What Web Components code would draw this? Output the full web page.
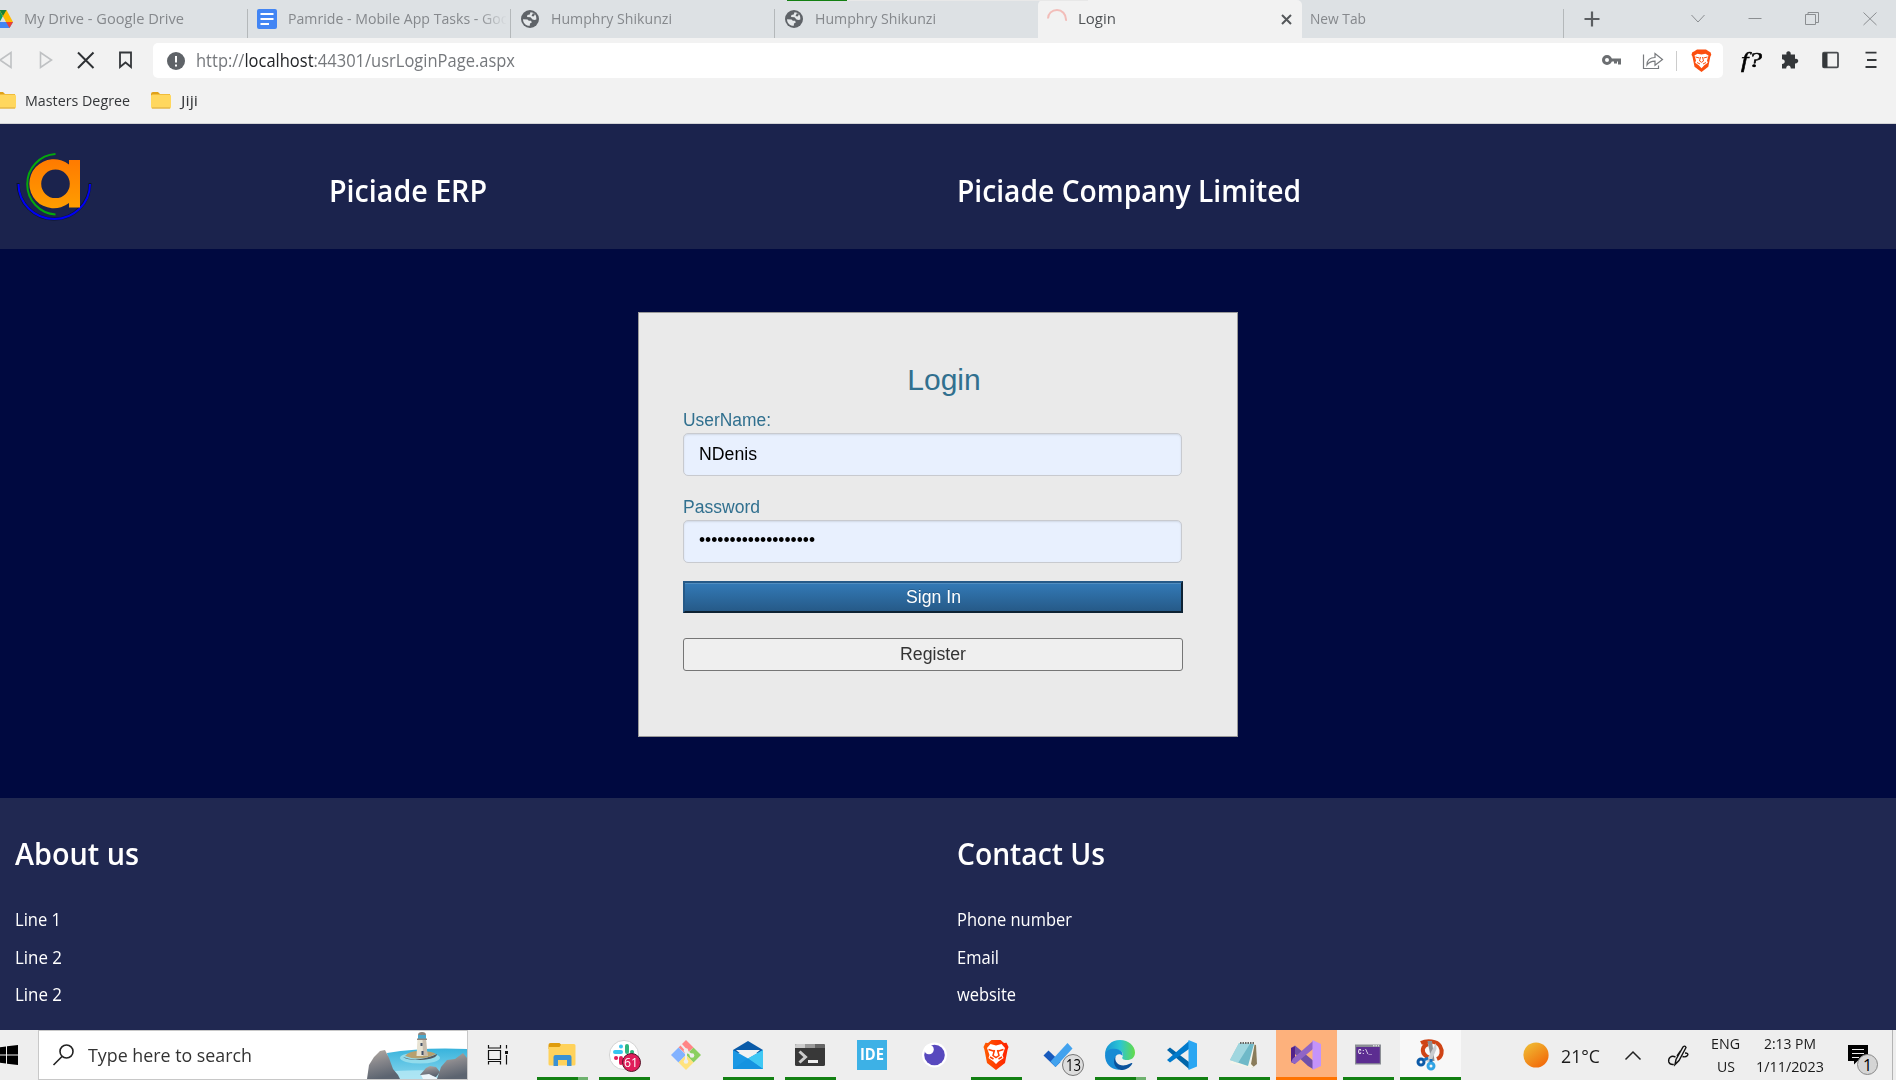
<!DOCTYPE html>
<html lang="en">
<head>
<meta charset="utf-8">
<title>Login</title>
<style>
html,body{margin:0;height:100%;overflow:hidden;background:#000940}
body{font-family:"Open Sans","Noto Sans",sans-serif}
</style>
</head>
<body>
<app-screen></app-screen>

<template id="t-screen">
<style>:host{display:flex;flex-direction:column;width:1896px;height:1080px;overflow:hidden}</style>
<browser-chrome></browser-chrome>
<site-header></site-header>
<login-panel></login-panel>
<site-footer></site-footer>
<task-bar></task-bar>
</template>

<template id="t-tab">
<style>
:host{display:flex;align-items:center;flex:none;box-sizing:border-box;width:263.5px;height:38px;color:#85888c;font-size:15px;position:relative;line-height:37px}
:host([sep])::after{content:"";position:absolute;right:0;top:9px;width:1px;height:29px;background:#b4b8ba}
:host([active]){background:#f2f2f2;color:#505356;border-radius:5px 5px 0 0}
.i{display:flex;width:20px;height:20px;margin-left:9px;flex:none;align-items:center;justify-content:center}
.t{margin:-1px 0 0 11px;flex:1;overflow:hidden;white-space:nowrap;display:flex}
:host([fade]) .t{-webkit-mask-image:linear-gradient(90deg,#000 190px,transparent 219px);margin-right:5px}
</style>
<span class="i"><slot name="icon"></slot></span><span class="t"><slot></slot></span><slot name="end"></slot>
</template>

<template id="t-chrome">
<style>
:host{display:flex;flex-direction:column;height:124px;flex:none;background:#f2f2f2;box-sizing:border-box;border-bottom:1px solid #d2d3d6;position:relative}
svg{display:block;flex:none}
.tabs{display:flex;height:38px;background:#dde1e4}
.tabs browser-tab:first-child{margin-left:-16px}
.bar{display:flex;align-items:center;height:40px}
.addr{display:flex;align-items:center;width:1570px;height:35px;background:#fff;border-radius:5px;margin:5px 0 0 21px;font-size:17.500px;color:#75787c;flex:none;line-height:35px}
.addr b{font-weight:400;color:#222427}
.marks{display:flex;align-items:center;height:45px;font-size:15px;color:#35373a}
.marks fit-text{margin-top:-2px}
.edge{position:absolute;left:787px;top:0;width:301px;height:1px;background:linear-gradient(90deg,#138012 60px,#e8e8e8 60px)}
.nav{margin-top:5px}
</style>
<div class="tabs">
<browser-tab sep><svg slot="icon" width="20" height="18" viewBox="0 0 20 18"><path d="M6.5 0L10 6 3.5 18 0 12z" fill="#0f9d58"/><path d="M6.5 0h7L20 12h-7z" fill="#ffba00"/><path d="M6.5 0h7L10 6z" fill="#188038"/><path d="M4 12h16l-3.5 6H.5z" fill="#4285f4"/><path d="M13 12h7l-3.5 6z" fill="#ea4335"/></svg><fit-text w="160">My Drive - Google Drive</fit-text></browser-tab>
<browser-tab sep fade><svg slot="icon" width="20" height="20" viewBox="0 0 20 20"><rect width="20" height="20" rx="2" fill="#4285f4"/><path d="M3.500 5h13M3.500 10h13M3.500 15h8.500" stroke="#fff" stroke-width="2"/></svg><fit-text w="229">Pamride - Mobile App Tasks - Goog</fit-text></browser-tab>
<browser-tab sep><svg slot="icon" width="18" height="18" viewBox="0 0 18 18"><circle cx="9" cy="9" r="9" fill="#5f6368"/><path d="M2 9.200l4.500.2 1.300 1.400h2.300l.7 1.600-1.800 1-.2 2.300C5 16 2 13 2 9.200zM9.500 2.200l-.8 2.200-2.300.7-.4 2 3.500.2 2 2.200 2 .6 1.800-.6C16 5 13 2.100 9.500 2.200z" fill="#e5e8ea"/><path d="M12 3l2 1.600-1.500 1.800L10.500 6z" fill="#5f6368"/></svg><fit-text w="121">Humphry Shikunzi</fit-text></browser-tab>
<browser-tab><svg slot="icon" width="18" height="18" viewBox="0 0 18 18"><circle cx="9" cy="9" r="9" fill="#5f6368"/><path d="M2 9.200l4.500.2 1.300 1.400h2.300l.7 1.600-1.800 1-.2 2.300C5 16 2 13 2 9.200zM9.500 2.200l-.8 2.200-2.300.7-.4 2 3.500.2 2 2.200 2 .6 1.800-.6C16 5 13 2.100 9.500 2.200z" fill="#e5e8ea"/><path d="M12 3l2 1.600-1.500 1.800L10.500 6z" fill="#5f6368"/></svg><fit-text w="121">Humphry Shikunzi</fit-text></browser-tab>
<browser-tab active><svg slot="icon" width="20" height="20" viewBox="0 0 20 20"><path d="M1 9.500C1 4.500 5 1 10 1s9 4 9 9.500c0 .7 0 1-.1 1.300" fill="none" stroke="#f2bdb9" stroke-width="2"/></svg><fit-text w="38">Login</fit-text><svg slot="end" width="11" height="11" viewBox="0 0 11 11" style="margin-right:10px"><path d="M1 1l9 9M10 1l-9 9" stroke="#55585b" stroke-width="2"/></svg></browser-tab>
<browser-tab sep style="margin-left:-31px;width:293px"><fit-text w="56">New Tab</fit-text></browser-tab>
<svg width="332" height="38" viewBox="0 0 332 38" fill="none" stroke="#8b8e91"><path d="M28 11.500v15M20.500 19h15" stroke="#5b5e61" stroke-width="2.200"/><path d="M127.500 15l6.500 7 6.500-7"/><path d="M184.500 18.500h13"/><path d="M241.500 14.500h10v10h-10zM244 14.500v-2h10.500v10H252"/><path d="M299.500 12.500l13 12.500M312.500 12.500L299.500 25"/></svg>
</div>
<div class="bar">
<svg class="nav" width="132" height="35" viewBox="0 0 132 35" fill="none" stroke-width="1.600"><path d="M11 9.500v15L0 17z" stroke="#bfc1c3"/><path d="M40.500 9.500v15l11-7.500z" stroke="#bfc1c3"/><path d="M78 9.500l15.500 15.500M93.500 9.500L78 25" stroke="#2e3134" stroke-width="2"/><path d="M120 9.500h11V24l-5.500-4.500L120 24z" stroke="#34373a" stroke-width="1.800"/></svg>
<div class="addr">
<svg width="18" height="18" viewBox="0 0 18 18" style="margin-left:13.500px"><circle cx="9" cy="9" r="9" fill="#5f6368"/><path d="M9 4v6.500M9 12.500v2" stroke="#fff" stroke-width="2"/></svg>
<fit-text w="319" style="margin-left:11px">http://<b>localhost</b>:44301/usrLoginPage.aspx</fit-text>
<svg width="110" height="35" viewBox="0 0 110 35" style="margin-left:1087px"><circle cx="5" cy="17" r="3.500" fill="none" stroke="#6b6e71" stroke-width="3"/><path d="M9 17h8.500v4.500M13.500 17v3.500" fill="none" stroke="#6b6e71" stroke-width="3"/><path d="M41.500 11.500v14h15v-3" fill="none" stroke="#787b7e" stroke-width="1.200"/><path d="M45 22c0-5 3-7.500 8-7.500v-4l7.500 6-7.500 5.800v-4.200c-4 0-6 1-8 3.900z" fill="none" stroke="#787b7e" stroke-width="1.200"/><path d="M74.500 8v20" stroke="#ccc"/><path d="M92 8.500l3-2h9l3 2 1.500.8.8 2.500-1 2-2 10L99.500 29l-7-5.200-2-10-1-2 .8-2.500z" fill="#fb4f10"/><path d="M92.500 12.500l3-1.800 4 .8 4-.8 3 1.800-1.500 5 .8 2.200-3.500 2.600-2.800 3-2.800-3-3.500-2.600.8-2.200z" fill="#fff"/><path d="M93.500 14l4 1M105.500 14l-4 1M98.500 14l-1 4 2 1.300 2-1.300-1-4M95 19.500l3 1.500M104 19.500l-3 1.500" stroke="#fb4f10" fill="none"/></svg>
</div>
<fit-text w="21" style="margin:3px 0 0 18px;font:italic 400 20px/34px 'Liberation Serif',serif;color:#000;-webkit-text-stroke:.5px #000">f?</fit-text>
<svg class="nav" width="120" height="35" viewBox="0 0 120 35" style="margin-left:17px"><path d="M4 11.500h3.500c-1.300-4 5-4.500 4.200 0H16V16c4-1.200 4.700 4.800 0 4.400v5.100h-4.200c0-4-4.600-4-4.600 0H3v-4.600c3.700-.2 3.700-4.600 0-4.700v-4.700z" fill="#34373a"/><rect x="44" y="9.700" width="15" height="14.600" rx="1" fill="none" stroke="#4a4d50" stroke-width="1.800"/><path d="M44 10h4.500v14.500H44z" fill="#34373a"/><path d="M86.500 9.700h11M88 17h9.500M86.500 24h11" stroke="#34373a" stroke-width="1.800"/></svg>
</div>
<div class="marks">
<svg width="20" height="17" viewBox="0 0 20 17" style="margin-left:-4px"><path d="M0 2q0-2 2-2h5l2 2h10v5H0z" fill="#e0a118"/><rect x="0" y="2.500" width="20" height="14" rx="1.500" fill="#ffd75e"/><path d="M1 16h18" stroke="#d9a83d"/></svg>
<fit-text w="105" style="margin-left:9px">Masters Degree</fit-text>
<svg width="20" height="17" viewBox="0 0 20 17" style="margin-left:21px"><path d="M0 2q0-2 2-2h5l2 2h10v5H0z" fill="#e0a118"/><rect x="0" y="2.500" width="20" height="14" rx="1.500" fill="#ffd75e"/><path d="M1 16h18" stroke="#d9a83d"/></svg>
<fit-text w="17" style="margin-left:9.500px">Jiji</fit-text>
</div>
<div class="edge"></div>
</template>

<template id="t-header">
<style>
:host{display:flex;height:125px;flex:none;background:#1b234d;color:#fff;font-weight:600;font-size:30px;box-sizing:border-box;padding-left:14px}
svg{margin-top:24px;flex:none}
fit-text{line-height:134px}
</style>
<svg width="84" height="76" viewBox="14 148 84 76" fill="none"><defs><linearGradient id="o" x1="0" y1="0" x2="0" y2="1"><stop offset="0" stop-color="#ff7a00"/><stop offset="1" stop-color="#ff9d00"/></linearGradient></defs><path d="M18 185a36 36 0 0 0 72 0" stroke="#000a18" stroke-width="3" transform="translate(0 -2)" opacity=".6"/><path d="M18.500 184a35.700 35 0 0 0 71.500 0" stroke="#0000f5" stroke-width="2"/><path d="M55.500 154a30 30.300 0 0 0 0 60.500" stroke="#05a80c" stroke-width="2"/><path fill-rule="evenodd" fill="url(#o)" d="M69 164.500V160h11v47.500H69V203a24.500 24.500 0 1 1 0-38.500zM55.500 169.500a14.300 14.300 0 1 0 0 28.600 14.300 14.300 0 1 0 0-28.600z"/></svg>
<fit-text w="158" style="margin-left:231px">Piciade ERP</fit-text>
<fit-text w="344" style="margin-left:470px">Piciade Company Limited</fit-text>
</template>

<template id="t-field">
<style>
:host{display:block}
label{display:flex;color:#31708f;line-height:26px;height:26px}
div{box-sizing:border-box;height:43px;border:1px solid #c8cacf;border-radius:5px;background:#e8f0fe;box-shadow:inset 0 1px 2px rgba(0,0,0,.1);padding-left:15px;color:#000;line-height:41px;display:flex}
</style>
<label><slot name="label"></slot></label><div><slot></slot></div>
</template>

<template id="t-login">
<style>
:host{display:flex;flex-direction:column;height:549px;flex:none;background:#000940;font:18px "Liberation Sans",Arial,sans-serif;box-sizing:border-box;padding:63px 0 0 638px}
section{box-sizing:border-box;width:600px;height:425px;border:1px solid #999;background:#eaeaea;padding:46px 55px 0 44px;display:flex;flex-direction:column}
h1{margin:0 -23px 6px 0;font-weight:400;font-size:30px;line-height:42px;text-align:center;color:#31708f}
button{font:inherit;width:500px;margin:0;padding:0;box-sizing:border-box;flex:none;display:flex;justify-content:center}
.s{height:32px;border:2px solid;border-color:#265a88 #0e2233 #0e2233 #265a88;background:linear-gradient(#337ab7,#265a88);color:#fff;box-shadow:inset 0 1px 0 rgba(255,255,255,.15);text-shadow:0 -1px 0 rgba(0,0,0,.2);margin-top:18px;line-height:28px}
.r{height:33px;border:1px solid #767676;border-radius:3px;background:#efefef;color:#333;margin-top:25px;line-height:30px}
form-field+form-field{margin-top:18px}
</style>
<section>
<h1>Login</h1>
<form-field><fit-text slot="label" w="88">UserName:</fit-text><fit-text w="58">NDenis</fit-text></form-field>
<form-field><fit-text slot="label" w="77">Password</fit-text><fit-text w="116" style="line-height:39px">•••••••••••••••••••</fit-text></form-field>
<button class="s"><fit-text w="55">Sign In</fit-text></button>
<button class="r"><fit-text w="66">Register</fit-text></button>
</section>
</template>

<template id="t-footer">
<style>
:host{display:grid;grid-template-columns:942px 1fr;height:232px;flex:none;box-sizing:border-box;padding:36px 0 0 15px;background:#202851;color:#fff;font-size:18px}
h2{margin:0 0 27px;font-size:30px;font-weight:600;line-height:40px;height:40px}
p{margin:0;line-height:37.500px;height:37.500px}
</style>
<div><h2><fit-text w="124">About us</fit-text></h2><p><fit-text w="46">Line 1</fit-text></p><p><fit-text w="47">Line 2</fit-text></p><p><fit-text w="47">Line 2</fit-text></p></div>
<div><h2><fit-text w="148">Contact Us</fit-text></h2><p><fit-text w="115">Phone number</fit-text></p><p><fit-text w="42">Email</fit-text></p><p><fit-text w="59">website</fit-text></p></div>
</template>

<template id="t-task">
<style>
:host{display:flex;flex:none;width:62px;height:50px;box-sizing:border-box;position:relative;justify-content:center;align-items:center}
.b{position:absolute;bottom:0;left:5.500px;width:51px;height:3px;background:#128012;display:none}
:host([run]) .b{display:block}
:host([multi]) .b{background:linear-gradient(90deg,#128012 41px,#6eb26e 41px)}
:host([hot]) .h{background:#fdb17c}:host([hot]) .b{background:#ff7300}
:host([lit]) .h{background:#f8f8f8}
:host([hot]) .b,:host([lit]) .b{left:.5px;width:61px}
.h{position:absolute;inset:0 .5px}
.i{position:relative;display:block;width:30px;height:30px;margin-left:-1px}
</style>
<div class="h"></div><div class="i"><slot></slot></div><div class="b"></div>
</template>

<template id="t-taskbar">
<style>
:host{display:flex;align-items:center;height:50px;flex:none;background:#eee;color:#1a1a1a;font-size:19px}
svg{display:block;flex:none;overflow:visible}
.search{display:flex;align-items:center;box-sizing:border-box;width:430px;height:50px;border:1px solid #c8c8c8;background:#fff;margin-left:20px;flex:none}
.n{position:absolute;display:flex;align-items:center;justify-content:center;box-sizing:border-box;border-radius:50%}
.col{display:flex;flex-direction:column;align-items:center;font-size:15px;line-height:23px}
.end{position:relative;width:21px;height:20px;margin-left:24px}
</style>
<svg width="18" height="20" viewBox="0 0 18 20"><path d="M0 2.300L6 1.400V9.400H0zM7 1.200L18 0V9.400H7zM0 10.500h6v8L0 17.700zM7 10.500h11V20L7 18.700z" fill="#000"/></svg>
<div class="search">
<svg width="22" height="22" viewBox="0 0 22 22" style="margin-left:14px" fill="none" stroke="#222" stroke-width="1.600"><circle cx="13.500" cy="7.500" r="6.500"/><path d="M9 12.500L.5 21"/></svg>
<fit-text w="164" style="margin-left:13px;color:#333">Type here to search</fit-text>
<svg width="100" height="48" viewBox="0 0 100 48" style="margin-left:115px"><defs><linearGradient id="sea" x1="0" y1="0" x2="0" y2="1"><stop offset="0" stop-color="#38b3dc"/><stop offset="1" stop-color="#8bd8ee"/></linearGradient><linearGradient id="rk" x1="0" y1="0" x2=".3" y2="1"><stop offset="0" stop-color="#b7aea5"/><stop offset=".5" stop-color="#85858a"/><stop offset="1" stop-color="#5c6470"/></linearGradient></defs><path d="M20 22Q55 16 100 18v30H24z" fill="url(#sea)"/><ellipse cx="53" cy="27" rx="20" ry="5.500" fill="#92dcec"/><path d="M28 40q35-2 50 1l-10 7H30z" fill="#b6e8f5" opacity=".8"/><path d="M36 26q14 6 34-3 0 5-17 6-14 0-17-3z" fill="#515963"/><path d="M38 25q4-5 14-5 13 0 17 3-16 8-31 2z" fill="#b7a06f"/><path d="M50.500 8h8.500l1.500 17H49.500z" fill="#e8e3d3"/><path d="M55.500 8H59l1.500 17H56z" fill="#c7bcad"/><path d="M51 4h8v4h-8z" fill="#4aa8cc"/><path d="M51 4q0-3 4-3t4 3zM50 7.500h10V9H50z" fill="#90857c"/><path d="M54.500 12v3M55.500 20v4" stroke="#435067" stroke-width="2"/><path d="M0 48l2-14 5-8 6-6 5-1 4 8 4 11 5 6 2 4z" fill="url(#rk)"/><path d="M53 44l6-7 4-2 6 1 4 5-4 5-8-1z" fill="url(#rk)"/><path d="M54 44l8-1 10 5H56z" fill="#eef6fa"/><path d="M70 48l4-12 6-7 8-1 8-6 4 5v21z" fill="url(#rk)"/></svg>
</div>
<svg width="20" height="20" viewBox="0 0 20 20" style="margin-left:20px" fill="none" stroke="#111" stroke-width="1.200"><path d="M.5 5.500h12v9H.500zM.5 0v3h12V0M.5 19.500v-3h12v3M18.500 0v3.500M18.500 10v9.500"/><path d="M17 6h3v3h-3z" fill="#111" stroke="none"/></svg>
<task-item run multi style="margin-left:23.500px"><svg width="30" height="30"><path d="M1.500 5q0-2 2-2h9l2 2-1 4h-12z" fill="#df9c0c"/><path d="M14.500 4H27q1.500 0 1.500 1.500V24q0 1.500-1.500 1.500H3q-1.500 0-1.500-1.500V7h11z" fill="#ffd25b"/><path d="M6.500 25.500V17q0-2 2-2h14q2 0 2 2v9h-4.500v-6h-9v6H6.500z" fill="#3a91d4"/></svg></task-item>
<task-item run><svg width="30" height="30"><circle cx="15" cy="15" r="14.600" fill="#fff" stroke="#d4d4d4"/><g stroke-width="4" stroke-linecap="round"><path d="M6 12h6M12 6.500v.1" stroke="#36c5f0"/><path d="M18 6v6M23 12h.1" stroke="#2eb67d"/><path d="M12 18v5M7 18h.1" stroke="#e01e5a"/><path d="M18 18h6" stroke="#ecb22e"/></g></svg><span class="n" style="left:12.500px;top:12.500px;width:19px;height:19px;background:#e01e5a;border:1.500px solid #541226;color:#fff;font-size:12px"><fit-text w="14">61</fit-text></span></task-item>
<task-item><svg width="30" height="30"><path d="M15 0l7.500 7.500L15 14 7.500 7.500z" fill="#ff8585"/><path d="M7.500 7.500L15 15l-7.500 7.500L0 15z" fill="#82b2ff"/><path d="M22.500 7.500L30 15l-7.500 7.500L15 15z" fill="#8bcf60"/><path d="M15 15l7.500 7.500L15 30l-7.500-7.500z" fill="#ffe27c"/><path d="M10 4.500l5 5.500v12M15 10.500l6 5" stroke="#eee" stroke-width="2" fill="none"/><circle cx="15" cy="10.500" r="2.300" fill="#eee"/><circle cx="15" cy="21.500" r="2.300" fill="#eee"/><circle cx="21" cy="15.500" r="2.300" fill="#eee"/></svg></task-item>
<task-item run><svg width="30" height="30"><path d="M0 10L15 1l15 9v3H0z" fill="#0a5ba8"/><path d="M3 10h24l-12 10z" fill="#f2f2f2"/><path d="M0 10l15 8.500L30 10v19H0z" fill="#1b98e4"/><path d="M15 18.500L30 10v19z" fill="#3fc8f4"/><path d="M0 29l15-10.500L30 29z" fill="#1593e0"/></svg></task-item>
<task-item run><svg width="30" height="30"><rect y="4" width="30" height="22" rx="1.500" fill="#383838"/><path d="M0 8V5.500Q0 4 1.500 4H10v4z" fill="#ccc"/><path d="M10 4h10v4H10z" fill="#999"/><path d="M20 4h8.500Q30 4 30 5.500V8H20z" fill="#666"/><path d="M4.500 11.500l6 5.500-6 5.500" fill="none" stroke="#ccc" stroke-width="3"/><path d="M13 21.500h10" stroke="#eee" stroke-width="3"/></svg></task-item>
<task-item><div style="width:30px;height:30px;background:#3db1e6;color:#fff;display:flex;justify-content:center;font:700 16px/28px 'Open Sans',sans-serif"><fit-text w="24">IDE</fit-text></div></task-item>
<task-item><svg width="30" height="30"><circle cx="15.500" cy="15" r="12.500" fill="#fff"/><circle cx="15.500" cy="15" r="10.300" fill="#5849be"/><circle cx="10" cy="9.500" r="4.800" fill="#fff"/></svg></task-item>
<task-item run><svg width="30" height="30"><defs><linearGradient id="br"><stop stop-color="#ff5b00"/><stop offset="1" stop-color="#ff2000"/></linearGradient></defs><path d="M7 3l3.500-3h9L23 3l2.500-.2 2 4.200-1 3-2.500 13L15 30 6 23 3.500 10l-1-3 2-4.200z" fill="url(#br)"/><path d="M6 8l3.500-4 5.500 1.500L20.500 4 24 8l-2.500 7 1 3-5 3.500L15 24l-2.500-2.500-5-3.500 1-3z" fill="#fff"/><path d="M7.500 9.500l5 1.500M22.500 9.500l-5 1.500M13.500 10l-1.500 5.500 3 2 3-2L16.500 10M9 17l3.500 2M21 17l-3.500 2" fill="none" stroke="#ff3d00" stroke-width="1.500"/></svg></task-item>
<task-item><svg width="30" height="30"><path d="M.5 15.500L5.500 10.500l12 11.500-5 5z" fill="#185abd"/><path d="M7.500 21.500L24.500 3l5 5.500L12.500 27z" fill="#42a2ee"/></svg><span class="n" style="left:19px;top:14px;width:22px;height:22px;background:#ddd;border:1.300px solid #777;font-size:16px;color:#000"><fit-text w="15">13</fit-text></span></task-item>
<task-item run multi><svg width="30" height="30"><defs><linearGradient id="e1"><stop stop-color="#1794d4"/><stop offset=".5" stop-color="#2cc5d4"/><stop offset="1" stop-color="#64dc47"/></linearGradient></defs><path d="M0 15C0 6 6.500 0 15 0s15 6 15 12.500c0 5-3.500 7.500-8 7.500-4 0-5.500-1.500-4.500-3 1.800-3-.5-7-6-7C6 10 1 12 0 15z" fill="url(#e1)"/><path d="M0 15c1-5 5.500-6.500 9.500-6.300C15 9 18.500 12 17.500 16c-2-3-7.500-2-7.500 3 0 6 5 10 10 9-10 5-20-2-20-13z" fill="#178bd4"/><path d="M10.500 16.500c-1.500 6 4 10.500 11 8.500l5-2c.8-.3 1 0 .7.700C25 28 20 30 16 30 10 29 7 22 10.500 16.500z" fill="#09529d"/></svg></task-item>
<task-item run><svg width="30" height="30"><path d="M0 10l3-2.500L22 22v7z" fill="#0065a9"/><path d="M0 20l22-19v8L3 22.500z" fill="#007acc"/><path d="M21.500 0L30 3.500v23L21.500 30z" fill="#2aa6f2"/></svg></task-item>
<task-item run><svg width="30" height="30"><path d="M20 3l7 2 1 19-5 4-3-3z" fill="#8a7c5a"/><path d="M10 2h16l-4 22 3 3-2 1-22-5z" fill="#f4f4ea"/><path d="M10 3l15 1-6 22L1 20z" fill="#6fb9c8"/><path d="M10 3l11 .8L9 23 1 20z" fill="#b5e2e8" opacity=".7"/><path d="M11 3h15" stroke="#666" stroke-width="2" stroke-dasharray="1.500 1"/></svg></task-item>
<task-item run hot><svg width="30" height="30"><path d="M0 8l4-2.500 18 15v8.500l-5-3L4 14v4l-2.500 1.500z" fill="#7050a8"/><path d="M0 8l4-1.500V24L0 22z" fill="#52218a"/><path d="M4 24L22 9V1L2 18.500 0 22z" fill="#9065c6"/><path d="M21.500 0L30 4v22l-8.500 4z" fill="#c493fa"/></svg></task-item>
<task-item run><svg width="30" height="30"><path d="M2 4.500h26v20H2z" fill="#8b8e94"/><path d="M3.200 7h23.600v16.200H3.200z" fill="#5c2d91"/><path d="M20 5.800h6" stroke="#fff" stroke-dasharray="1.500 1"/></svg><span style="position:absolute;left:4.500px;top:6px;color:#fff;display:flex;font:700 8px/11px 'Liberation Mono',monospace"><fit-text w="14">C:\_</fit-text></span></task-item>
<task-item run lit><svg width="30" height="30"><path d="M6 3C12 0 22 1 25 6c3 5 2 11-3 13M13 4C7 6 6 12 11 16l4 2" fill="none" stroke="#cf4416" stroke-width="4"/><path d="M12.500 1h4.500l2.500 20h-3z" fill="#8d9094"/><path d="M11 21L21 3l.5 6-6 14z" fill="#c9ccd0"/><circle cx="6" cy="22" r="3" fill="none" stroke="#0d5ba8" stroke-width="3"/><circle cx="16" cy="26" r="3" fill="none" stroke="#32a4e4" stroke-width="3"/><path d="M9 20l4-2M16 22v-3" stroke="#1a74c0" stroke-width="3"/></svg></task-item>
<svg width="26" height="26" viewBox="0 0 26 26" style="margin-left:61.500px"><defs><linearGradient id="sun" x1="0" y1="0" x2=".7" y2="1"><stop stop-color="#efc438"/><stop offset="1" stop-color="#f26a0a"/></linearGradient></defs><circle cx="13" cy="13" r="12.600" fill="url(#sun)"/></svg>
<fit-text w="39" style="margin-left:12px;padding-top:2px">21°C</fit-text>
<svg width="16" height="9" viewBox="0 0 16 9" style="margin-left:25px" fill="none" stroke="#222" stroke-width="1.500"><path d="M.5 8.500L8 1l7.500 7.500"/></svg>
<svg width="21" height="21" viewBox="0 0 21 21" style="margin-left:27px" fill="none" stroke="#111" stroke-width="1.400"><path d="M7 19.500l1-5L15 2q2-2 3 .5L11 15.500zM7.500 12C3 10 0 13 .800 17q1 3 5 2.500M17 8q4 0 2.500 2.500-2 2-5 1M12.500 6L9 11"/></svg>
<div class="col" style="margin-left:22px"><fit-text w="29">ENG</fit-text><fit-text w="18">US</fit-text></div>
<div class="col" style="margin-left:16px"><fit-text w="52">2:13 PM</fit-text><fit-text w="68">1/11/2023</fit-text></div>
<div class="end"><svg width="21" height="20" viewBox="0 0 21 20"><path d="M0 0h20v16H9.500L6 19.500V16H0z" fill="#000"/><path d="M4 4.500h12M4 8.500h12M4 12.500h7" stroke="#eee" stroke-width="1.200"/></svg><span class="n" style="left:9px;top:9px;width:21px;height:21px;background:#d5d5d5;border:1px solid #888;font-size:16px;color:#000">1</span></div>
<svg width="4" height="50" style="margin-left:23px"><path d="M.5 0v50" stroke="#b4b4b4"/></svg>
</template>

<script>
/* Text run condensed or stretched horizontally to the width in its "w" attribute. */
class FitText extends HTMLElement {
  connectedCallback() {
    if (this.shadowRoot) return;
    const root = this.attachShadow({mode: 'open'});
    root.innerHTML = '<style>:host{display:block;flex:none;white-space:nowrap}span{display:inline-block;transform-origin:0 50%}</style><span><slot></slot></span>';
    const width = parseFloat(this.getAttribute('w'));
    this.style.width = width + 'px';
    const span = root.querySelector('span');
    const natural = span.getBoundingClientRect().width;
    if (natural) span.style.transform = `scaleX(${width / natural})`;
  }
}

function define(name, templateId, setup) {
  customElements.define(name, class extends HTMLElement {
    connectedCallback() {
      if (this.shadowRoot) return;
      const root = this.attachShadow({mode: 'open'});
      root.appendChild(document.importNode(document.getElementById(templateId).content, true));
      if (setup) setup(this, root);
    }
  });
}

define('browser-tab', 't-tab', (host, root) => {
  if (!host.querySelector('[slot=icon]')) {
    root.querySelector('.i').style.display = 'none';
    root.querySelector('.t').style.marginLeft = '39px';
  }
});
define('form-field', 't-field');
define('task-item', 't-task');
define('browser-chrome', 't-chrome');
define('site-header', 't-header');
define('login-panel', 't-login');
define('site-footer', 't-footer');
define('task-bar', 't-taskbar');
define('app-screen', 't-screen');
customElements.define('fit-text', FitText);
</script>
</body>
</html>
